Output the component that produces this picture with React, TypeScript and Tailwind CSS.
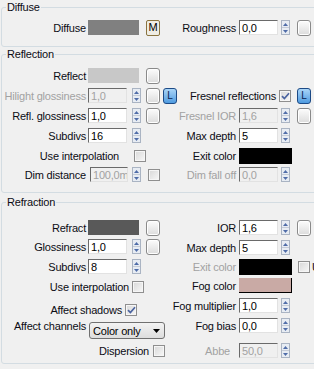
import React from "react";

const dimInk = "text-[#a2a2a2]";

function Group({ title, className = "", children }: { title: string; className?: string; children: React.ReactNode }) {
  return (
    <fieldset className={`mr-[-12px] rounded-[3px] border border-[#d3dce2] ${className}`}>
      <legend className="ml-[4px] px-[1px] leading-[14px]">{title}</legend>
      {children}
    </fieldset>
  );
}

function Row({ className = "", children }: { className?: string; children?: React.ReactNode }) {
  return <div className={`flex h-[15px] shrink-0 items-center ${className}`}>{children}</div>;
}

function Label({ w = "w-[84px]", dim, className = "", children }: { w?: string; dim?: boolean; className?: string; children: React.ReactNode }) {
  return (
    <div className={`flex shrink-0 justify-end whitespace-nowrap ${w} ${dim ? dimInk : ""} ${className}`}>
      <span className="shrink-0">{children}</span>
    </div>
  );
}

function Field({ value, dim, className = "ml-[2px]", w = "w-[39px]" }: { value: string; dim?: boolean; className?: string; w?: string }) {
  return (
    <div
      className={`flex h-[15px] shrink-0 items-center overflow-hidden whitespace-nowrap border border-t-[#6a6a6a] border-l-[#6a6a6a] border-r-[#e2e2e2] border-b-[#e2e2e2] pl-[2px] ${w} ${
        dim ? "bg-[#f0f0f0] text-[#a2a2a2]" : "bg-white text-black"
      } ${className}`}
    >
      {value}
    </div>
  );
}

function Spinner({ className = "ml-[5px]" }: { className?: string }) {
  return (
    <div className={`flex h-[15px] w-[9px] shrink-0 flex-col border border-[#aab4c3] bg-[#e7ecf3] ${className}`}>
      <div className="flex flex-1 items-center justify-center border-b border-[#c4cbd7]">
        <svg width="5" height="3" viewBox="0 0 5 3">
          <path d="M2.5 0L5 3H0z" fill="#4f6ca8" />
        </svg>
      </div>
      <div className="flex flex-1 items-center justify-center">
        <svg width="5" height="3" viewBox="0 0 5 3">
          <path d="M0 0H5L2.5 3z" fill="#4f6ca8" />
        </svg>
      </div>
    </div>
  );
}

function MapBtn({ className = "ml-[5px]" }: { className?: string }) {
  return (
    <div
      className={`h-[16px] w-[14px] shrink-0 rounded-[3px] border border-[#8a8a8a] bg-linear-to-b from-[#fcfcfc] to-[#dcdcdc] shadow-[inset_0_0_0_1px_#ffffff] ${className}`}
    />
  );
}

function MBtn({ className = "" }: { className?: string }) {
  return (
    <div
      className={`flex h-[16px] w-[14px] shrink-0 items-center justify-center rounded-[2px] border border-[#8a7440] bg-[#efede4] text-[11px] leading-none text-black ${className}`}
    >
      M
    </div>
  );
}

function LBtn({ className = "" }: { className?: string }) {
  return (
    <div
      className={`flex h-[16px] w-[14px] shrink-0 items-center justify-center rounded-[3px] border border-[#1c4a86] bg-linear-to-b from-[#a9d5f8] to-[#4e9be0] text-[10px] leading-none text-[#0a2350] ${className}`}
    >
      L
    </div>
  );
}

function Check({ on, className = "" }: { on?: boolean; className?: string }) {
  return (
    <div
      className={`flex h-[12px] w-[12px] shrink-0 items-center justify-center border border-[#8f8f8f] bg-linear-to-br from-[#d8d8d8] to-[#f8f8f8] shadow-[inset_0_0_0_1px_#f6f6f6] ${className}`}
    >
      {on && (
        <svg width="9" height="8" viewBox="0 0 9 8">
          <path d="M1 4.2L3.4 6.6L8 1.2" stroke="#4b64a0" strokeWidth="1.7" fill="none" />
        </svg>
      )}
    </div>
  );
}

function Swatch({ color, className = "ml-[2px] w-[51px] h-[15px]" }: { color: string; className?: string }) {
  return <div className={`shrink-0 ${color} ${className}`} />;
}

export default function App() {
  return (
    <div className="h-[369px] w-[314px] overflow-hidden bg-[#f0f0f0] pl-[1px] font-['Liberation_Sans',Arial,sans-serif] text-[11px] leading-[14px] tracking-[-0.2px] text-[#0c0c14]">
      <Group title="Diffuse">
        <div className="flex pb-[11px]">
          <div className="flex w-[176px] shrink-0 flex-col">
            <Row className="mt-[6px]">
              <Label>Diffuse</Label>
              <Swatch color="bg-[#808080]" />
              <MBtn className="ml-[7px]" />
            </Row>
          </div>
          <div className="flex flex-1 flex-col">
            <Row className="mt-[6px]">
              <Label w="w-[58px]">Roughness</Label>
              <Field value="0,0" className="ml-[3px]" />
              <Spinner className="ml-[3px]" />
              <MapBtn className="ml-[7px]" />
            </Row>
          </div>
        </div>
      </Group>

      <Group title="Reflection">
        <div className="flex pb-[10px]">
          <div className="flex w-[176px] shrink-0 flex-col">
            <Row className="mt-[7px]">
              <Label>Reflect</Label>
              <Swatch color="bg-[#c8c8c8]" />
              <MapBtn className="ml-[7px]" />
            </Row>
            <Row className="mt-[5px]">
              <Label dim>Hilight glossiness</Label>
              <Field value="1,0" dim />
              <Spinner />
              <MapBtn />
              <LBtn className="ml-[3px]" />
            </Row>
            <Row className="mt-[5px]">
              <Label>Refl. glossiness</Label>
              <Field value="1,0" />
              <Spinner />
              <MapBtn />
            </Row>
            <Row className="mt-[5px]">
              <Label>Subdivs</Label>
              <Field value="16" />
              <Spinner />
            </Row>
            <Row className="mt-[5px]">
              <Label w="w-[117px]">Use interpolation</Label>
              <Check className="ml-[15px]" />
            </Row>
            <Row className="mt-[4px]">
              <Label>Dim distance</Label>
              <Field value="100,0m" dim className="ml-[4px]" w="w-[38px]" />
              <Spinner className="ml-[4px]" />
              <Check className="ml-[7px]" />
            </Row>
          </div>
          <div className="flex flex-1 flex-col">
            <Row className="mt-[7px]" />
            <Row className="mt-[5px]">
              <Label w="w-[98px]">Fresnel reflections</Label>
              <Check on className="ml-[3px]" />
              <LBtn className="ml-[6px]" />
            </Row>
            <Row className="mt-[5px]">
              <Label w="w-[58px]" dim>
                Fresnel IOR
              </Label>
              <Field value="1,6" dim className="ml-[3px]" />
              <Spinner className="ml-[3px]" />
              <MapBtn className="ml-[7px]" />
            </Row>
            <Row className="mt-[5px]">
              <Label w="w-[58px]">Max depth</Label>
              <Field value="5" className="ml-[3px]" />
              <Spinner className="ml-[3px]" />
            </Row>
            <Row className="mt-[5px]">
              <Label w="w-[58px]">Exit color</Label>
              <Swatch color="bg-black" className="ml-[3px] h-[16px] w-[53px]" />
            </Row>
            <Row className="mt-[4px]">
              <Label w="w-[58px]" dim>
                Dim fall off
              </Label>
              <Field value="0,0" dim className="ml-[3px]" />
              <Spinner className="ml-[3px]" />
            </Row>
          </div>
        </div>
      </Group>

      <Group title="Refraction" className="mt-[2px]">
        <div className="flex pb-[5px]">
          <div className="flex w-[176px] shrink-0 flex-col">
            <Row className="mt-[11px]">
              <Label>Refract</Label>
              <Swatch color="bg-[#595959]" />
              <MapBtn className="ml-[7px]" />
            </Row>
            <Row className="mt-[4px]">
              <Label>Glossiness</Label>
              <Field value="1,0" />
              <Spinner />
              <MapBtn />
            </Row>
            <Row className="mt-[5px]">
              <Label>Subdivs</Label>
              <Field value="8" />
              <Spinner />
            </Row>
            <Row className="mt-[5px]">
              <Label w="w-[127px]">Use interpolation</Label>
              <Check className="ml-[3px]" />
            </Row>
            <Row className="mt-[8px]">
              <Label w="w-[120px]">Affect shadows</Label>
              <Check on className="ml-[3px]" />
            </Row>
            <div className="mt-[5px] flex h-[17px] shrink-0 items-start">
              <Label className="-mt-[3px]">Affect channels</Label>
              <div className="ml-[3px] flex h-[17px] w-[76px] shrink-0 items-center justify-between rounded-[3px] border border-[#707070] bg-linear-to-b from-[#f3f3f3] to-[#dddddd] pl-[3px] pr-[4px] text-black">
                <span>Color only</span>
                <svg width="7" height="4" viewBox="0 0 7 4">
                  <path d="M0 0H7L3.5 4z" fill="#000" />
                </svg>
              </div>
            </div>
            <Row className="mt-[4px]">
              <Label w="w-[147px]">Dispersion</Label>
              <Check className="ml-[4px]" />
            </Row>
          </div>
          <div className="flex flex-1 flex-col">
            <Row className="mt-[11px]">
              <Label w="w-[58px]">IOR</Label>
              <Field value="1,6" className="ml-[3px]" />
              <Spinner className="ml-[3px]" />
              <MapBtn className="ml-[7px]" />
            </Row>
            <Row className="mt-[5px]">
              <Label w="w-[58px]">Max depth</Label>
              <Field value="5" className="ml-[3px]" />
              <Spinner className="ml-[3px]" />
            </Row>
            <div className="mt-[4px] flex h-[16px] shrink-0 items-center">
              <Label w="w-[58px]" dim>
                Exit color
              </Label>
              <Swatch color="bg-black" className="ml-[3px] h-[16px] w-[53px]" />
              <Check className="ml-[6px]" />
              <span className="ml-[2px] whitespace-nowrap">Use</span>
            </div>
            <Row className="mt-[3px]">
              <Label w="w-[58px]">Fog color</Label>
              <Swatch color="bg-[#c9aaa5]" className="ml-[3px] h-[15px] w-[53px] border-r border-b border-black" />
            </Row>
            <Row className="mt-[5px]">
              <Label w="w-[58px]">Fog multiplier</Label>
              <Field value="1,0" className="ml-[3px]" />
              <Spinner className="ml-[3px]" />
            </Row>
            <Row className="mt-[5px]">
              <Label w="w-[58px]">Fog bias</Label>
              <Field value="0,0" className="ml-[3px]" />
              <Spinner className="ml-[3px]" />
            </Row>
            <Row className="mt-[10px]">
              <Label w="w-[58px]" dim className="pr-[6px]">
                Abbe
              </Label>
              <Field value="50,0" dim className="ml-[3px]" />
              <Spinner className="ml-[3px]" />
            </Row>
          </div>
        </div>
      </Group>
    </div>
  );
}
